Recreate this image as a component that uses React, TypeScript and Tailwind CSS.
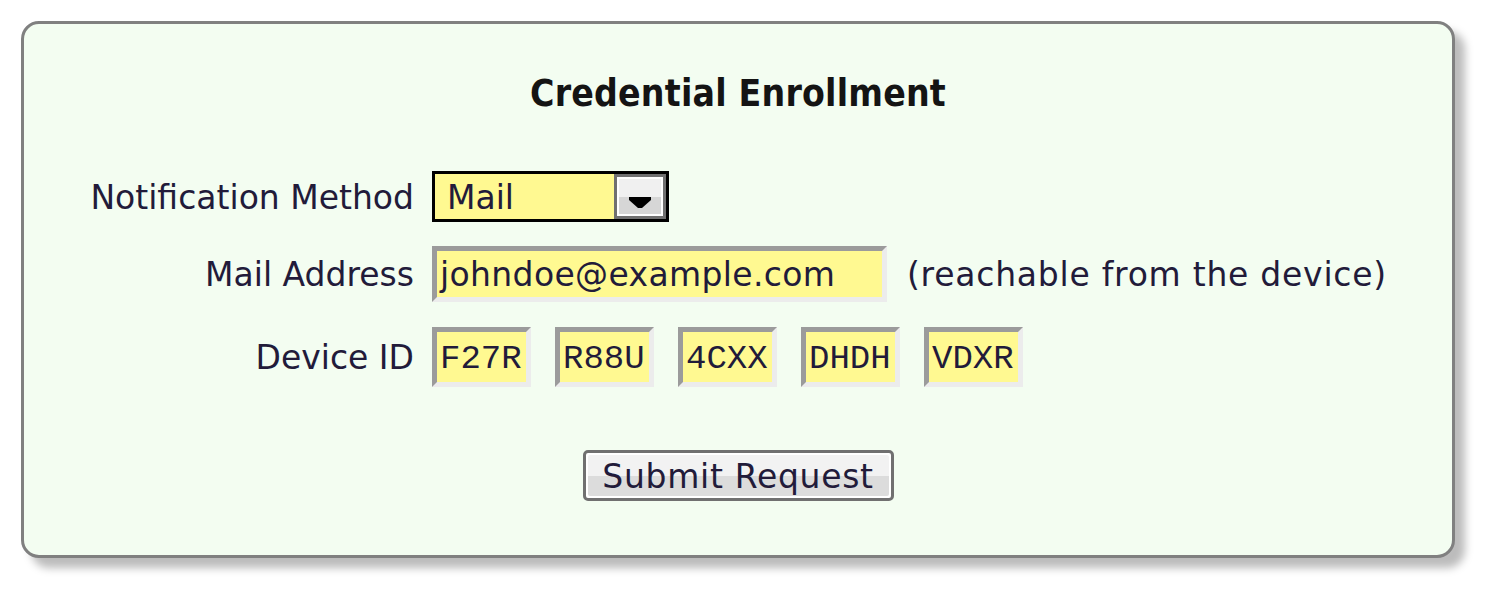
import React from "react";

const sans = { fontFamily: '"DejaVu Sans", Verdana, sans-serif' } as React.CSSProperties;

function Inset({ w, children, h, mono, extra }: { w: string; h: string; children: React.ReactNode; mono?: boolean; extra?: string }) {
  return (
    <div
      className={`${w} ${h} flex items-center bg-[#fff991] border-[5px] border-t-[#9b9b9b] border-l-[#9b9b9b] border-b-[#ececec] border-r-[#ececec] ${mono ? "pl-[3px] pt-[4px] text-[34px]" : "pl-[3px] text-[33px]"} ${extra ?? ""} text-[#221b3a]`}
      style={mono ? { fontFamily: '"Liberation Mono", "Courier New", monospace' } : sans}
    >
      {children}
    </div>
  );
}

export default function App() {
  return (
    <div className="w-[1500px] h-[600px] bg-white pt-[21px] pl-[21px]" style={sans}>
      <div className="w-[1434px] h-[537px] rounded-[18px] border-[3px] border-[#808080] bg-[#f3fdf1] shadow-[10px_10px_8px_#bcbcbc] flex flex-col">
        <div
          className="mt-[48px] text-center font-bold text-[37px] leading-[44px] text-[#141414] tracking-[0.2px]"
          style={{ fontFamily: '"DejaVu Sans Condensed", "DejaVu Sans", sans-serif', fontStretch: "condensed" }}
        >
          Credential Enrollment
        </div>

        <div className="mt-[55px] flex flex-col text-[33px] text-[#221b3a]">
          <div className="flex items-center h-[51px]">
            <div className="w-[390px] text-right pt-[2px]">Notification Method</div>
            <div className="ml-[18px] w-[237px] h-[51px] border-[3px] border-black bg-[#fff991] flex items-center justify-between">
              <span className="pl-[12px] pt-[2px]">Mail</span>
              <div className="w-[52px] h-[45px] border-[3px] border-[#707070] bg-white p-[2px]">
                <div className="w-full h-full flex flex-col relative">
                  <div className="h-1/2 bg-[#f0f0f0]" />
                  <div className="h-1/2 bg-[#d6d6d6]" />
                  <svg className="absolute left-[10px] top-[18px]" width="22" height="12" viewBox="0 0 22 12">
                    <polygon points="0,0 22,0 22,3 13,11 9,11 0,3" fill="#000" />
                  </svg>
                </div>
              </div>
            </div>
          </div>

          <div className="flex items-center h-[56px] mt-[24px]">
            <div className="w-[390px] text-right pt-[2px]">Mail Address</div>
            <div className="ml-[18px]">
              <Inset w="w-[455px]" h="h-[56px]" extra="tracking-[0.35px] pt-[2px]">johndoe@example.com</Inset>
            </div>
            <div className="ml-[20px] tracking-[0.75px] pt-[2px]">(reachable from the device)</div>
          </div>

          <div className="flex items-center h-[60px] mt-[25px]">
            <div className="w-[390px] text-right pt-[2px]">Device ID</div>
            <div className="ml-[18px] flex gap-[24px]">
              {["F27R", "R88U", "4CXX", "DHDH", "VDXR"].map((c) => (
                <Inset key={c} w="w-[99px]" h="h-[60px]" mono>
                  {c}
                </Inset>
              ))}
            </div>
          </div>
        </div>

        <div className="mt-[63px] flex justify-center">
          <button className="w-[311px] h-[51px] rounded-[5px] border-[3px] border-[#707070] p-[2px] bg-white">
            <div className="w-full h-full flex flex-col relative rounded-[2px] overflow-hidden">
              <div className="h-1/2 bg-[#f2f2f2]" />
              <div className="h-1/2 bg-[#dcdcdc]" />
              <span className="absolute inset-0 flex items-center justify-center pt-[2px] text-[33px] tracking-[0.7px] text-[#221b3a]">
                Submit Request
              </span>
            </div>
          </button>
        </div>
      </div>
    </div>
  );
}
